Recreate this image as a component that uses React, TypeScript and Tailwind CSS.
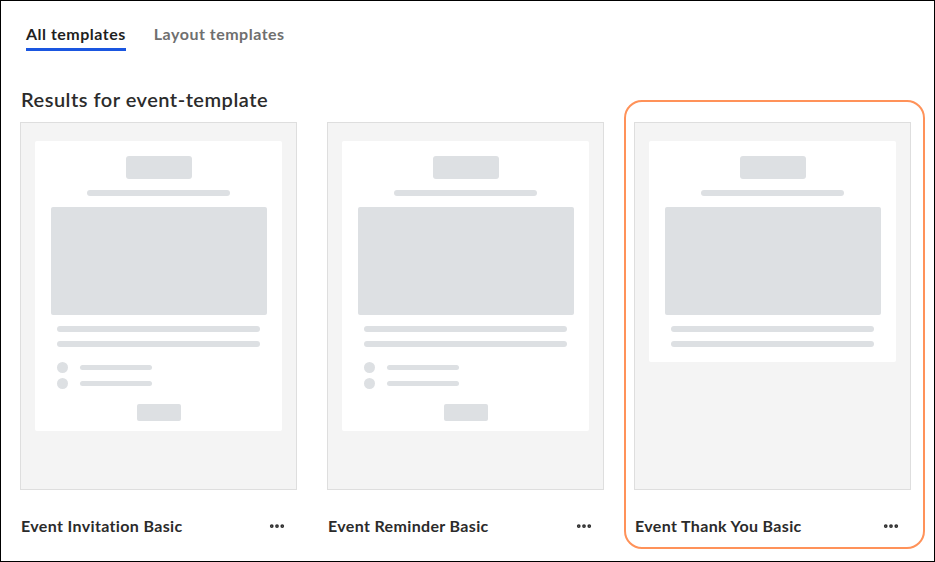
import { MoreHorizontal } from "lucide-react";

const font = { fontFamily: "Lato, 'Open Sans', sans-serif" };

function Bar({ w, h = "h-[6px]" }: { w: string; h?: string }) {
  return <div className={`${w} ${h} rounded-full bg-[#dde0e3]`} />;
}

function Preview({ full }: { full: boolean }) {
  return (
    <div className="h-[368px] w-[277px] border border-[#dedede] bg-[#f4f4f4] pl-[14px] pt-[18px]">
      <div className={`flex w-[247px] flex-col items-center rounded-[2px] bg-white pt-[15px] ${full ? "pb-[10px]" : "pb-[15px]"}`}>
        <div className="h-[23px] w-[66px] rounded-[3px] bg-[#dde0e3]" />
        <div className="mt-[11px] h-[6px] w-[143px] rounded-full bg-[#dde0e3]" />
        <div className="mt-[11px] h-[108px] w-[216px] rounded-[2px] bg-[#dde0e3]" />
        <div className="mt-[11px] flex w-[203px] flex-col gap-[9px]">
          <Bar w="w-full" />
          <Bar w="w-full" />
        </div>
        {full && (
          <>
            <div className="mt-[15px] flex w-[203px] flex-col gap-[5px]">
              {[0, 1].map((i) => (
                <div key={i} className="flex items-center gap-[12px]">
                  <div className="h-[11px] w-[11px] rounded-full bg-[#dde0e3]" />
                  <Bar w="w-[72px]" h="h-[5px]" />
                </div>
              ))}
            </div>
            <div className="mt-[15px] h-[17px] w-[44px] rounded-[2px] bg-[#dde0e3]" />
          </>
        )}
      </div>
    </div>
  );
}

function Card({ title, full, selected }: { title: string; full: boolean; selected?: boolean }) {
  return (
    <div className="relative w-[277px]">
      {selected && (
        <div className="pointer-events-none absolute -top-[22px] -left-[10px] -right-[14px] -bottom-[11px] rounded-[18px] border-2 border-[#ff9259]" />
      )}
      <Preview full={full} />
      <div className="mt-[24px] flex h-[24px] items-center justify-between pl-[1px] pr-[11px]">
        <span className="text-[16px] font-bold tracking-[0.35px] text-[#2b2b2b]">{title}</span>
        <MoreHorizontal size={18} strokeWidth={3} className="text-[#2b2b2b]" />
      </div>
    </div>
  );
}

export default function App() {
  return (
    <div style={font} className="h-[562px] w-[935px] overflow-hidden border border-black bg-white">
      <div className="ml-[25px] mt-[22px] flex gap-[28px]">
        <div className="border-b-[3px] border-[#1a56e0] pb-[4px] text-[16px] leading-[21px] font-bold tracking-[0.5px] text-[#1f1f1f]">
          All templates
        </div>
        <div className="pb-[4px] text-[16px] leading-[21px] font-bold tracking-[0.5px] text-[#6f6f6f]">
          Layout templates
        </div>
      </div>
      <div className="ml-[20px] mt-[36px] text-[20px] leading-[25px] font-semibold tracking-[0.5px] text-[#2b2b2b]">
        Results for event-template
      </div>
      <div className="ml-[19px] mt-[10px] flex gap-[30px]">
        <Card title="Event Invitation Basic" full />
        <Card title="Event Reminder Basic" full />
        <Card title="Event Thank You Basic" full={false} selected />
      </div>
    </div>
  );
}
